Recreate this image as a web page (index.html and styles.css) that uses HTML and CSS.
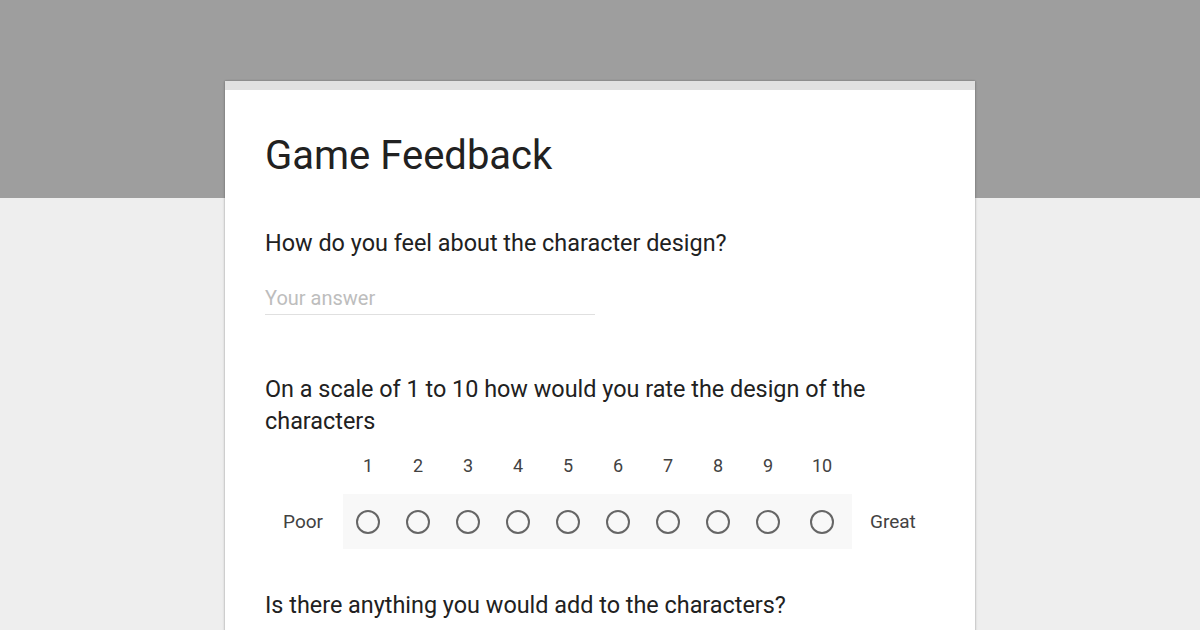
FILE: index.html
```html
<!DOCTYPE html>
<html>
<head>
<meta charset="utf-8">
<link rel="stylesheet" href="styles.css">
</head>
<body>
<div class="card">
  <h1 class="title">Game Feedback</h1>
  <div class="question q-first">
    <div class="q-text">How do you feel about the character design?</div>
    <div class="answer">Your answer</div>
  </div>
  <div class="question q-scale">
    <div class="q-text">On a scale of 1 to 10 how would you rate the design of the characters</div>
    <div class="scale">
      <div class="scale-row numbers">
        <div class="side"></div>
        <div class="cols">
          <div class="col">1</div><div class="col">2</div><div class="col">3</div><div class="col">4</div><div class="col">5</div>
          <div class="col">6</div><div class="col">7</div><div class="col">8</div><div class="col">9</div><div class="col last">10</div>
        </div>
      </div>
      <div class="scale-row radios">
        <div class="side">Poor</div>
        <div class="cols box">
          <div class="col"><span class="radio"></span></div><div class="col"><span class="radio"></span></div>
          <div class="col"><span class="radio"></span></div><div class="col"><span class="radio"></span></div>
          <div class="col"><span class="radio"></span></div><div class="col"><span class="radio"></span></div>
          <div class="col"><span class="radio"></span></div><div class="col"><span class="radio"></span></div>
          <div class="col"><span class="radio"></span></div><div class="col last"><span class="radio"></span></div>
        </div>
        <div class="side-right">Great</div>
      </div>
    </div>
  </div>
  <div class="question q-last">
    <div class="q-text">Is there anything you would add to the characters?</div>
  </div>
</div>
</body>
</html>
```

FILE: styles.css
```css
html, body {
  margin: 0;
  padding: 0;
}
body {
  width: 1200px;
  height: 630px;
  overflow: hidden;
  background: linear-gradient(#9e9e9e 0, #9e9e9e 198px, #eeeeee 198px);
  font-family: Roboto, "Noto Sans", Arial, sans-serif;
  color: #212121;
}
.card {
  width: 750px;
  height: 560px;
  margin: 81px auto 0;
  background: #ffffff;
  border-top: 9px solid #e0e0e0;
  box-shadow: 0 0 2px rgba(0,0,0,0.25), 0 1px 3px rgba(0,0,0,0.15);
  padding: 0 40px;
  box-sizing: border-box;
  overflow: hidden;
}
.title {
  margin: 0;
  padding-top: 42px;
  font-size: 40px;
  font-weight: 400;
  line-height: 48px;
  color: #212121;
}
.q-first {
  margin-top: 47px;
}
.q-text {
  font-size: 23.4px;
  line-height: 32px;
  color: #212121;
}
.answer {
  margin-top: 28px;
  width: 330px;
  font-size: 20px;
  line-height: 22px;
  color: #bdbdbd;
  padding-bottom: 5px;
  border-bottom: 1px solid #e0e0e0;
}
.q-scale {
  margin-top: 58px;
}
.scale {
  margin-top: 14px;
}
.scale-row {
  display: flex;
  align-items: center;
}
.side {
  width: 78px;
  box-sizing: border-box;
  padding-right: 20px;
  text-align: right;
  font-size: 19px;
  color: #424242;
}
.side-right {
  padding-left: 18px;
  font-size: 19px;
  color: #424242;
}
.cols {
  display: flex;
}
.col {
  width: 50px;
  display: flex;
  justify-content: center;
  align-items: center;
}
.col.last {
  width: 58px;
}
.numbers {
  height: 28px;
}
.numbers .col {
  font-size: 18px;
  color: #424242;
}
.radios {
  margin-top: 15px;
}
.box {
  background: #f8f8f8;
  height: 55px;
  padding-right: 1px;
}
.radio {
  width: 24px;
  height: 24px;
  border: 2px solid #666666;
  border-radius: 50%;
  box-sizing: border-box;
}
.q-last {
  margin-top: 40px;
}
```
